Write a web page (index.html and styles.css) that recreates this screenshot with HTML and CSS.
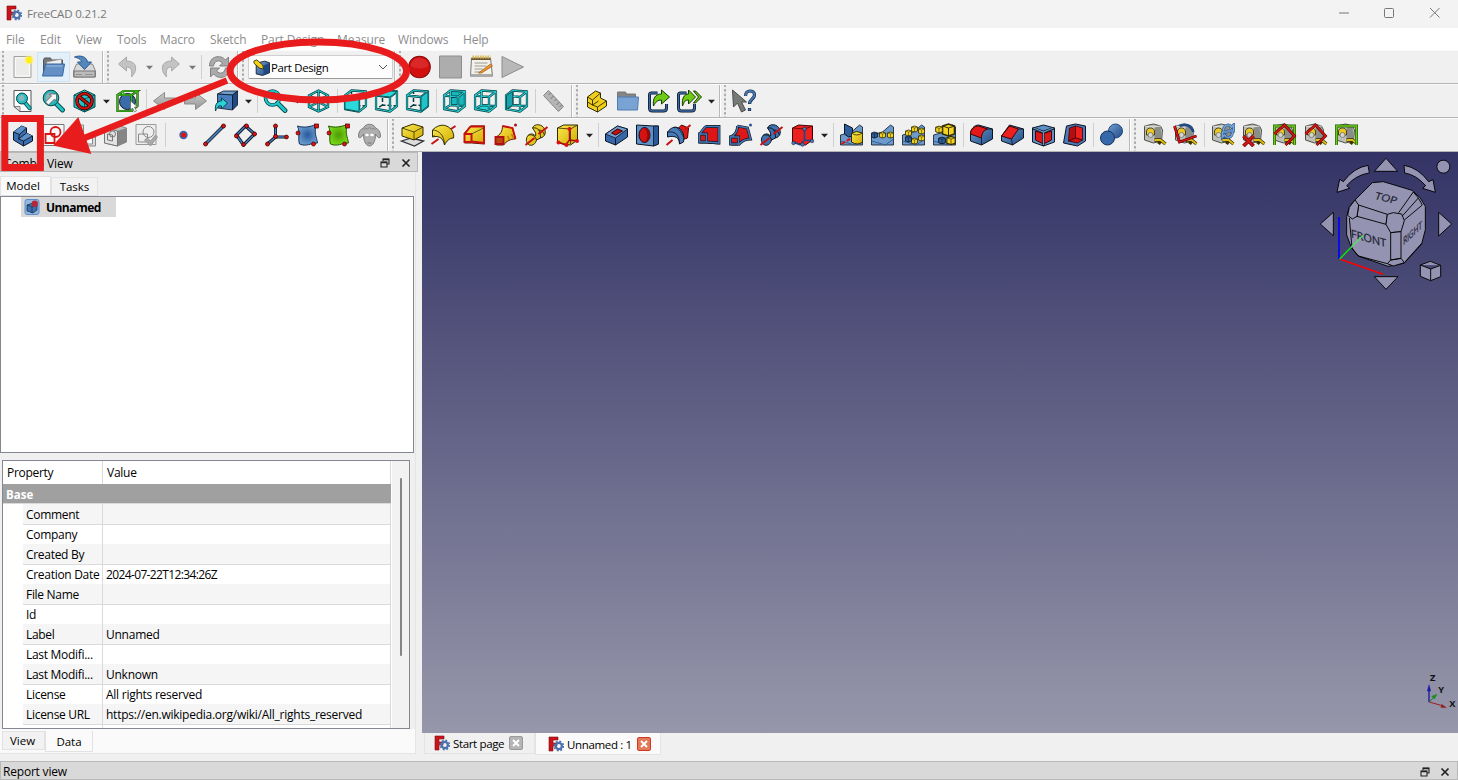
FILE: index.html
```html
<!DOCTYPE html>
<html lang="en">
<head>
<meta charset="utf-8">
<title>FreeCAD 0.21.2</title>
<link rel="stylesheet" href="styles.css">
</head>
<body>
<svg class="defs" aria-hidden="true">
<defs>
<linearGradient id="gb" x1="0" y1="0" x2="1" y2="1"><stop offset="0" stop-color="#729fcf"/><stop offset="1" stop-color="#204a87"/></linearGradient>
<linearGradient id="gy" x1="0" y1="0" x2="1" y2="1"><stop offset="0" stop-color="#fce94f"/><stop offset="1" stop-color="#d0ab00"/></linearGradient>
<linearGradient id="gt" x1="0" y1="0" x2="1" y2="1"><stop offset="0" stop-color="#34e0e2"/><stop offset="1" stop-color="#0e9fa3"/></linearGradient>
<linearGradient id="gg" x1="0" y1="0" x2="0" y2="1"><stop offset="0" stop-color="#c9c9c9"/><stop offset="1" stop-color="#969696"/></linearGradient>
<radialGradient id="gbr"><stop offset="0" stop-color="#285a9c"/><stop offset="1" stop-color="#6a9bd0"/></radialGradient>
<radialGradient id="ggr"><stop offset="0" stop-color="#4e9a06"/><stop offset="1" stop-color="#78d916"/></radialGradient>
<radialGradient id="gsun"><stop offset="0" stop-color="#fff200"/><stop offset=".5" stop-color="#ffee30"/><stop offset="1" stop-color="#fff79a" stop-opacity="0"/></radialGradient>

<symbol id="logo" viewBox="0 0 16 16"><path d="M1 1h9v3H5v3h4v3H5v5H1z" fill="#cb1419" stroke="#7d0b0e" stroke-width=".6"/><circle cx="10.800" cy="10" r="3.100" fill="none" stroke="#4b72ac" stroke-width="2.300"/><circle cx="10.800" cy="10" r="4.700" fill="none" stroke="#4b72ac" stroke-width="1.500" stroke-dasharray="1.900 1.790"/></symbol>
<symbol id="new" viewBox="0 0 24 24"><path d="M3.500 1.500h17v21h-17z" fill="#ebebe9" stroke="#a2a29e"/><path d="M5 3h14v18H5z" fill="none" stroke="#fafafa"/><circle cx="18.500" cy="5" r="5.500" fill="url(#gsun)"/></symbol>
<symbol id="open" viewBox="0 0 24 24"><path d="M2 21V5l1-2h6l1 2h11v5" fill="#777" stroke="#555"/><path d="M5 7l15-3v6H5z" fill="#eee" stroke="#888" stroke-width=".7"/><path d="M4 9h19l-2 12H1z" fill="#648fc4" stroke="#3465a4"/><path d="M5 11h16" stroke="#9bbce2"/></symbol>
<symbol id="save" viewBox="0 0 24 24"><path d="M4 9h16l3 7v6H1v-6z" fill="#d8d8d8" stroke="#888"/><path d="M1.500 16h21v6h-21z" fill="#bcbcbc" stroke="#777"/><path d="M13 19.500h7M4 19.500h6" stroke="#666" stroke-dasharray="1 1"/><path d="M2 2C7 0 14 1 15 7h4l-7 7.500L5 7h4C9 5 6 3 2 2z" fill="#5286bd" stroke="#2f5b91"/></symbol>
<symbol id="undo" viewBox="0 0 24 24"><path d="M3 9l8-7v4c8 0 11 5 8 12l-3 4c1-8-1-10-5-10v4z" fill="#c3c3c3" stroke="#aaa"/></symbol>
<symbol id="redo" viewBox="0 0 24 24"><path d="M21 9l-8-7v4C5 6 2 11 5 18l3 4c-1-8 1-10 5-10v4z" fill="#c3c3c3" stroke="#aaa"/></symbol>
<symbol id="refresh" viewBox="0 0 24 24"><path d="M2 11C2 1 13-1 18 5l3-3v9h-9l3-3c-4-4-8-2-9 3zM22 13c0 10-11 12-16 6l-3 3v-9h9l-3 3c4 4 8 2 9-3z" fill="#aaa" stroke="#808080"/></symbol>
<symbol id="rec" viewBox="0 0 24 24"><circle cx="12" cy="12" r="10.800" fill="#d21010" stroke="#8c0c0c" stroke-width="1.100"/><path d="M3 11a9 8 0 0118 0q-9 5-18 0" fill="#e94a4a" opacity=".4"/></symbol>
<symbol id="stop" viewBox="0 0 24 24"><path d="M1 1h22v22H1z" fill="#adadad" stroke="#8d8d8d"/></symbol>
<symbol id="macro" viewBox="0 0 24 24"><path d="M2 3h19l2 18H1z" fill="#f3f1e8" stroke="#777"/><path d="M1 19h22v3H1z" fill="#aaa"/><path d="M2 3h19v2H2z" fill="#6d5633"/><path d="M3 2h18" stroke="#deb849" stroke-width="3" stroke-dasharray="1.500 1"/><path d="M5 8h13M5 11h12M5 14h8M5 17h6" stroke="#999"/><path d="M9 18l12-9 2 2-11 7z" fill="#ed9830" stroke="#9c520c" stroke-width=".7"/></symbol>
<symbol id="play" viewBox="0 0 24 24"><path d="M1.500 1.500L23 12 1.500 22.500z" fill="#b8b8b8" stroke="#8c8c8c"/></symbol>
<symbol id="wbpd" viewBox="0 0 16 16"><path d="M3 4l8-2 4.500 1.500v9.500L9 15.500 3 14z" fill="url(#gb)" stroke="#0b1521" stroke-width=".8"/><path d="M10 6v9l5-2.500V4z" fill="#204a87"/><path d="M.8 2L3.500.8 9 5.500l1 4-4-1-5-4.500z" fill="#f5d21a" stroke="#302b00" stroke-width=".8"/></symbol>
<symbol id="lens" viewBox="0 0 24 24"><path d="M14 14l7.500 7.500" stroke="#06474a" stroke-width="4.800" stroke-linecap="round"/><circle cx="9" cy="9" r="7" fill="#ccebed" fill-opacity=".4" stroke="#06474a" stroke-width="3.600"/><circle cx="9" cy="9" r="7" fill="none" stroke="#20c5c8" stroke-width="2"/><path d="M14.500 14.500l7 7" stroke="#20c5c8" stroke-width="3" stroke-linecap="round"/></symbol>
<symbol id="fitall" viewBox="0 0 24 24"><path d="M3.500 1.500h17v21h-11l-6-5z" fill="#fff" stroke="#555"/><path d="M3.500 17.500h6v5z" fill="#ddd" stroke="#555" stroke-width=".7"/><path d="M14 13l5 6" stroke="#06474a" stroke-width="4.200" stroke-linecap="round"/><path d="M14 13l5 6" stroke="#20c5c8" stroke-width="2.600" stroke-linecap="round"/><circle cx="11.500" cy="9.500" r="5.500" fill="#24bfc4" stroke="#06474a"/><circle cx="11" cy="9" r="3" fill="#89b7bc"/></symbol>
<symbol id="fitsel" viewBox="0 0 24 24"><path d="M15 15l6 6" stroke="#06474a" stroke-width="4.800" stroke-linecap="round"/><path d="M15 15l6 6" stroke="#20c5c8" stroke-width="3" stroke-linecap="round"/><circle cx="9.500" cy="9" r="7.800" fill="#28b5bc" stroke="#06474a"/><circle cx="9" cy="8.500" r="5" fill="#90b0b5"/><path d="M4 13l6-6-2-2h7v7l-2-2-6 6z" fill="#f5f5f5" stroke="#333" stroke-width=".6"/></symbol>
<symbol id="draw" viewBox="0 0 24 24"><path d="M12 1l10.500 5v12L12 23 1.500 18V6z" fill="url(#gt)" stroke="#06474a"/><path d="M1.500 6L12 10l10.500-4M12 10v13" stroke="#06474a" fill="none" stroke-width=".8"/><circle cx="12" cy="12" r="7.500" fill="none" stroke="#280000" stroke-width="3.600"/><path d="M6.500 7.500l11 9" stroke="#280000" stroke-width="3.600"/><circle cx="12" cy="12" r="7.500" fill="none" stroke="#cc1010" stroke-width="2.200"/><path d="M6.500 7.500l11 9" stroke="#cc1010" stroke-width="2.200"/></symbol>
<symbol id="bbox" viewBox="0 0 24 24"><circle cx="12" cy="12.500" r="8" fill="#3a6cac" stroke="#0b1521"/><path d="M2 6h14v16H2zM2 6l6-4h14l-6 4M22 2v15l-6 5" fill="none" stroke="#17330b" stroke-width="2.200"/><path d="M2 6h14v16H2zM2 6l6-4h14l-6 4M22 2v15l-6 5M8 2v4" fill="none" stroke="#3bb41c" stroke-width="1.400"/><path d="M15 12v9l2-2 2 4 2-1-2-4h3z" fill="#fff" stroke="#555" stroke-width=".6"/></symbol>
<symbol id="left" viewBox="0 0 24 24"><path d="M1 12L12 3.500V9h11v6H12v5.500z" fill="url(#gg)" stroke="#8b8b8b"/></symbol>
<symbol id="right" viewBox="0 0 24 24"><path d="M23 12L12 3.500V9H1v6h11v5.500z" fill="url(#gg)" stroke="#8b8b8b"/></symbol>
<symbol id="link" viewBox="0 0 24 24"><path d="M3 5l6-3h14l-5 4z" fill="#729fcf" stroke="#0b1521" stroke-width=".8"/><path d="M3 5l15 1v15L3 19z" fill="#4a7dbd" stroke="#0b1521" stroke-width=".8"/><path d="M18 6l5-4v14l-5 5z" fill="#204a87" stroke="#0b1521" stroke-width=".8"/><path d="M1 22c-1-8 3-10 6-10V9l6 5-6 6v-3c-3-1-4 1-6 5z" fill="#2bd3d6" stroke="#06474a"/></symbol>
<symbol id="iso" viewBox="0 0 24 24"><g fill="none"><path d="M12 1.500l9.500 5v11.500L12 22.500 2.500 18V6.500zM12 1.500v21M2.500 6.500L12 11l9.500-4.500M2.500 18L12 13l9.500 5" stroke="#073c3f" stroke-width="2.400"/><path d="M12 1.500l9.500 5v11.500L12 22.500 2.500 18V6.500zM12 1.500v21M2.500 6.500L12 11l9.500-4.500M2.500 18L12 13l9.500 5" stroke="#20c5c8" stroke-width="1.100"/></g></symbol>
<symbol id="wire" viewBox="0 0 24 24"><g fill="none" stroke-linejoin="round"><path d="M1.500 6.500l14 1.500v14.500L1.500 20zM1.500 6.500L8 1.500l14.500 1-7 5.500M22.500 2.500v14.500l-7 5.500" stroke="#073c3f" stroke-width="2.300"/><path d="M8 2v3M8 9v7l14 1M8 16l-6 4" stroke="#073c3f" stroke-width="1.500" stroke-dasharray="4 2"/><path d="M1.500 6.500l14 1.500v14.500L1.500 20zM1.500 6.500L8 1.500l14.500 1-7 5.500M22.500 2.500v14.500l-7 5.500" stroke="#24cccf" stroke-width="1.100"/></g></symbol>
<symbol id="wireb" viewBox="0 0 24 24"><g fill="none" stroke-linejoin="round"><path d="M8 1.500v14.500l14.500 1M8 16l-6.500 4M1.500 6.500l14 1.500v14.500L1.500 20zM1.500 6.500L8 1.500l14.500 1-7 5.500M22.500 2.500v14.500l-7 5.500" stroke="#073c3f" stroke-width="2.300"/><path d="M8 1.500v14.500l14.500 1M8 16l-6.500 4M1.500 6.500l14 1.500v14.500L1.500 20zM1.500 6.500L8 1.500l14.500 1-7 5.500M22.500 2.500v14.500l-7 5.500" stroke="#24cccf" stroke-width="1.100"/></g></symbol>
<symbol id="vfront" viewBox="0 0 24 24"><use href="#wire"/><path d="M1.500 6.500l14 1.500v14.500L1.500 20z" fill="#2bd9dc" stroke="#073c3f" stroke-width=".8"/></symbol>
<symbol id="vtop" viewBox="0 0 24 24"><use href="#wire"/><path d="M1.500 6.500L8 1.500l14.500 1-7 5.500z" fill="#2bd9dc" stroke="#073c3f" stroke-width=".8"/></symbol>
<symbol id="vright" viewBox="0 0 24 24"><use href="#wire"/><path d="M15.500 8l7-5.500v14.500l-7 5.500z" fill="#1fc4c8" stroke="#073c3f" stroke-width=".8"/></symbol>
<symbol id="vrear" viewBox="0 0 24 24"><path d="M8 2l14 1v14L8 16z" fill="#19b7bb"/><use href="#wireb"/></symbol>
<symbol id="vbottom" viewBox="0 0 24 24"><path d="M2 20l6-4 14 1-6 5z" fill="#2bd9dc"/><use href="#wireb"/></symbol>
<symbol id="vleft" viewBox="0 0 24 24"><use href="#wireb"/><path d="M2 6.500L8 2.500v13.500l-6 4z" fill="#18a4aa" stroke="#073c3f" stroke-width=".7"/></symbol>
<symbol id="ruler" viewBox="0 0 24 24"><path d="M7 1.500l15 16-5 5-15-16z" fill="#b5b5b5" stroke="#848484"/><path d="M9 4L7 6M12 7l-3 3M15 10l-2 2M18 13l-3 3M20 16l-2 2" stroke="#777"/></symbol>
<symbol id="part" viewBox="0 0 24 24"><path d="M3 8l8-6 5 2v5l6 3v5l-9 6-10-5z" fill="#f0cf1c" stroke="#302b00"/><path d="M3 8l5 3 8-7M3 13l5 3 6-4M8 11v5l5 2 9-6M13 18v5" fill="none" stroke="#302b00" stroke-width=".9"/></symbol>
<symbol id="folder" viewBox="0 0 24 24"><path d="M2 19V3h8l1 2h9v5" fill="#858585" stroke="#777"/><path d="M2 8h21l-1 13H2z" fill="#79a3d3" stroke="#4d7db4"/></symbol>
<symbol id="elink" viewBox="0 0 24 24"><path d="M11 4H5Q3 4 3 6v13q0 3 3 3h11q3 0 3-3v-4" fill="none" stroke="#0b1521" stroke-width="3"/><path d="M11 4H5Q3 4 3 6v13q0 3 3 3h11q3 0 3-3v-4" fill="none" stroke="#3a6aaa" stroke-width="1.500"/><path d="M7 17c-1-8 2-12 8-12V1l8 7-8 7v-4c-4 0-6 2-8 6z" fill="#6dcb13" stroke="#173a00"/></symbol>
<symbol id="elinks" viewBox="0 0 24 24"><path d="M9 4H3Q1 4 1 6v13q0 3 3 3h10q3 0 3-3v-4" fill="none" stroke="#0b1521" stroke-width="3"/><path d="M9 4H3Q1 4 1 6v13q0 3 3 3h10q3 0 3-3v-4" fill="none" stroke="#3a6aaa" stroke-width="1.500"/><path d="M5 17c-1-8 2-12 6-12V1l7 7-7 7v-4c-4 0-4 2-6 6zM16 2h2l6 6-6 6h-2l5-6z" fill="#6dcb13" stroke="#173a00"/></symbol>
<symbol id="whats" viewBox="0 0 24 24"><path d="M0 1l1 17 4-4 4 9 4-2-4-8h5z" fill="#777b77" stroke="#494d49"/><path d="M13 7c0-7 9-6 9-1 0 4-5 4-5 9M17 19v3" fill="none" stroke="#10203a" stroke-width="3.200"/><path d="M13 7c0-7 9-6 9-1 0 4-5 4-5 8.500M17 19.500v2" fill="none" stroke="#4478b8" stroke-width="2"/></symbol>

<symbol id="body" viewBox="0 0 24 24"><path d="M3 9l8-6 5 2v5l6 3v5l-9 5-10-6z" fill="#3b6eb0" stroke="#0b1521"/><path d="M3 9l8-6 5 2-7 6zM13 18l-5-2 8-6 6 3z" fill="#5f90c8"/><path d="M3 9l6 2.500 7-6.500M9 11.500L8 16l5 2 9-5M13 18v5M8 16l8-6" fill="none" stroke="#0b1521" stroke-width=".9"/></symbol>
<symbol id="sketch" viewBox="0 0 24 24"><path d="M1.500 1.500h21v21h-21z" fill="#f7f7f7" stroke="#777"/><path d="M4 11h9v9H4z" fill="none" stroke="#d91414" stroke-width="1.800"/><circle cx="14" cy="9" r="5" fill="none" stroke="#d91414" stroke-width="1.800"/></symbol>
<symbol id="gattach" viewBox="0 0 24 24"><path d="M1 2h10v12h12v9H9V14H1z" fill="#ddd" stroke="#888"/><path d="M13 15h7v6h-7z" fill="#fafafa" stroke="#888"/></symbol>
<symbol id="gmap" viewBox="0 0 24 24"><path d="M1 5l12-3 10 3v14l-9 4-13-3z" fill="#bebebe" stroke="#888"/><path d="M14 8l9-3v14l-9 4z" fill="#858585"/><path d="M1 5l13 3v15L1 20z" fill="#e3e3e3" stroke="#777"/><circle cx="9" cy="11" r="3" fill="none" stroke="#777"/><path d="M4 11l5 1v6l-5-1z" fill="none" stroke="#777"/></symbol>
<symbol id="gcheck" viewBox="0 0 24 24"><path d="M1.500 1.500h20v20h-20z" fill="#eee" stroke="#999"/><circle cx="14" cy="9" r="5.500" fill="none" stroke="#888"/><path d="M4 11h9v8H4z" fill="none" stroke="#888"/><path d="M10 17l3-2 3 3 5-6 2 2-7 9z" fill="#aaa" stroke="#8d8d8d" stroke-width=".8"/></symbol>
<symbol id="point" viewBox="0 0 24 24"><circle cx="12" cy="12" r="4.200" fill="#3767ac"/><circle cx="12" cy="12" r="2.500" fill="#e31212"/></symbol>
<symbol id="line" viewBox="0 0 24 24"><path d="M3 21L21 3" stroke="#0b1521" stroke-width="3.200"/><path d="M3 21L21 3" stroke="#477bb9" stroke-width="1.800"/><g fill="#e01212" stroke="#400" stroke-width=".8"><circle cx="3" cy="21" r="2"/><circle cx="21" cy="3" r="2"/></g></symbol>
<symbol id="plane" viewBox="0 0 24 24"><path d="M12 3l9 8-11 11-7-10z" fill="none" stroke="#0b1521" stroke-width="3.200"/><path d="M12 3l9 8-11 11-7-10z" fill="none" stroke="#477bb9" stroke-width="1.600"/><g fill="#e01212" stroke="#400" stroke-width=".8"><circle cx="13" cy="3" r="2"/><circle cx="21" cy="11" r="2"/><circle cx="10" cy="21.500" r="1.900"/><circle cx="3" cy="13" r="2"/></g></symbol>
<symbol id="csys" viewBox="0 0 24 24"><path d="M11 3v11h11M11 14l-8 7" fill="none" stroke="#0b1521" stroke-width="3"/><path d="M11 3v11h11M11 14l-8 7" fill="none" stroke="#477bb9" stroke-width="1.500"/><g fill="#e01212" stroke="#400" stroke-width=".8"><circle cx="11" cy="3" r="2"/><circle cx="11" cy="13.500" r="2"/><circle cx="22" cy="14" r="1.900"/><circle cx="3" cy="21" r="2"/></g></symbol>
<symbol id="shapeb" viewBox="0 0 24 24"><path d="M2 3c6 2 12 1 19-1.500-3 8 0 12 1 18.500-7 0-11 4-18 1-2-6 1-11-2-18z" fill="url(#gbr)" stroke="#16335b"/><g fill="#e01212" stroke="#400" stroke-width=".7"><rect x="19" y="1" width="4" height="4"/><circle cx="2.500" cy="10" r="2"/><circle cx="18" cy="21" r="2"/></g></symbol>
<symbol id="shapeg" viewBox="0 0 24 24"><path d="M2 3c6 2 12 1 19-1.500-3 8 0 12 1 18.500-7 0-11 4-18 1-2-6 1-11-2-18z" fill="url(#ggr)" stroke="#245700"/><g fill="#e01212" stroke="#400" stroke-width=".7"><rect x="19" y="1" width="4" height="4"/><circle cx="2.500" cy="10" r="2"/><circle cx="18" cy="21" r="2"/></g></symbol>
<symbol id="sheep" viewBox="0 0 24 24"><path d="M6 5c2-5 10-5 12 0 3 1 5 4 5 8 0 3-3 2-5-2 0 8-3 12-6 12s-6-4-6-12c-2 4-5 5-5 2 0-4 2-7 5-8z" fill="#aeaeae" stroke="#7d7d7d"/><path d="M6 7q2-3 4-1 2-3 4 0 3-2 4 1" stroke="#888" fill="none"/><ellipse cx="9.500" cy="12" rx="1.800" ry="1.200" fill="#fff"/><ellipse cx="14.500" cy="12" rx="1.800" ry="1.200" fill="#fff"/><path d="M10 20h4" stroke="#777"/></symbol>

<symbol id="pad" viewBox="0 0 24 24"><path d="M1 18l10-3 12 3-9 5z" fill="#ddd" stroke="#333" stroke-width="1.300"/><path d="M1.500 5l11-4L22.500 4v8l-9 5-12-4z" fill="url(#gy)" stroke="#302b00"/><path d="M1.500 5l12 4 9-5M13.500 9v8" fill="none" stroke="#302b00" stroke-width=".8"/></symbol>
<symbol id="revolve" viewBox="0 0 24 24"><path d="M15 9l9-6" stroke="#c81010" stroke-width="2"/><path d="M1 7C5 3 10 1 15 3c5 2 8 7 7 12-4 0-7 3-9 7C12 16 8 12 1 14z" fill="url(#gy)" stroke="#302b00"/><path d="M1 7c6 0 12 5 12 15M1 14l2-2" fill="none" stroke="#302b00" stroke-width=".8"/><path d="M0 21l7-5" stroke="#c81010" stroke-width="2"/></symbol>
<symbol id="loft" viewBox="0 0 24 24"><path d="M2 10L8 3h14v18l-13-1H2z" fill="url(#gy)" stroke="#5e1500"/><path d="M8 3.500l13.500 0V20L9 18.500" fill="none" stroke="#c81010" stroke-width="2"/><path d="M2 11h7v8H2zM2 11L8 3.500" fill="none" stroke="#c81010" stroke-width="2"/><path d="M9 11l12-6" stroke="#302b00" stroke-width=".7"/></symbol>
<symbol id="pipe" viewBox="0 0 24 24"><path d="M2 14c5-2 7-6 7-11l10 2 3 11c-5 0-9 2-12 6H3z" fill="url(#gy)" stroke="#5e1500"/><path d="M9 3l10 2 3 11" fill="none" stroke="#c81010" stroke-width="1.900"/><path d="M2 14h8v7H2z" fill="#b94710" stroke="#b21010" stroke-width="1.900"/><path d="M14 13l2 4M18 11l2 4" stroke="#cf7a13" stroke-width="1.600"/><circle cx="22" cy="2" r="1.500" fill="#9f1717"/></symbol>
<symbol id="helix" viewBox="0 0 24 24"><path d="M8 5c2-5 10-4 12 1 2 4 0 8-4 9l-4 2c-1 4-4 6-7 5-4-2-4-7-1-10 3-2 5-1 7 1 1-3-1-5-3-8z" fill="url(#gy)" stroke="#302b00"/><path d="M8 5c6-1 8 3 8 10M4 12c5-1 7 2 8 5M14 7c3 0 5 2 6 5" fill="none" stroke="#302b00"/><path d="M1 22L10 15M14 11L23 4" stroke="#c81010" stroke-width="2"/></symbol>
<symbol id="abox" viewBox="0 0 24 24"><path d="M2 5l6-3h14v15l-7 5-13-2z" fill="url(#gy)" stroke="#302b00"/><path d="M2 5l13 1 7-4M15 6v15" fill="none" stroke="#302b00" stroke-width=".8"/><path d="M14 6v11l8 1M14 17l-4 5M3 19l7 3" fill="none" stroke="#a70b0b" stroke-width="1.500"/><g fill="#d11"><circle cx="14" cy="6" r="2"/><circle cx="3" cy="19.500" r="2"/><circle cx="21.500" cy="18" r="2"/><circle cx="11" cy="22" r="2"/></g></symbol>
<symbol id="pocket" viewBox="0 0 24 24"><path d="M1 11l12-8 10 3v8L11 22 1 18z" fill="#3667a8" stroke="#0b1521"/><path d="M1 11l12-8 10 3-12 9z" fill="#729fcf" stroke="#0b1521" stroke-width=".8"/><path d="M11 15v7" stroke="#0b1521"/><path d="M7 10l6-4 5 2-7 4z" fill="#c51010" stroke="#400"/></symbol>
<symbol id="hole" viewBox="0 0 24 24"><path d="M1 2l17 1 5 0v18l-5 2L1 21z" fill="#5f90c8" stroke="#0b1521"/><path d="M18 3h5v18l-5 2z" fill="#285a9c" stroke="#0b1521" stroke-width=".8"/><ellipse cx="9" cy="12" rx="5.500" ry="7.500" fill="#d51212" stroke="#0b1521"/><path d="M9 5q5 6 1 14 4 0 4.500-7T9 5" fill="#980808"/></symbol>
<symbol id="groove" viewBox="0 0 24 24"><path d="M10 7l5-5 7 3-1 10-6 2z" fill="#e21818" stroke="#400"/><path d="M1 9c3-4 7-6 11-4 5 2 6 9 5 14l-4 2c0-6-4-9-12-7z" fill="#477bb9" stroke="#0b1521"/><path d="M1 9c8-1 12 3 12 12M8 4c5 1 7 6 9 10" stroke="#0b1521" fill="none" stroke-width=".8"/><path d="M0 22l6-5M18 7l6-5" stroke="#c81010" stroke-width="2"/></symbol>
<symbol id="sloft" viewBox="0 0 24 24"><path d="M2 10L8 3h14v18l-13-1H2z" fill="#dc1616" stroke="#0b1521"/><path d="M2 11h7v8H2zM8 3.500h13.500V20L9 19M2 11l6-7.500" fill="none" stroke="#0b1521" stroke-width="2.800"/><path d="M2 11h7v8H2zM8 3.500h13.500V20L9 19M2 11l6-7.500" fill="none" stroke="#477bb9" stroke-width="1.600"/></symbol>
<symbol id="spipe" viewBox="0 0 24 24"><path d="M2 13c5-2 7-5 7-10l10 2 3 11c-5 0-9 2-12 6H3z" fill="#dc1818" stroke="#400"/><path d="M9 3l10 2 3 11c-5 0-9 2-12 6M2 14h8v7H2zM2 14c5-2 7-6 7-11" fill="none" stroke="#0b1521" stroke-width="2.800"/><path d="M9 3l10 2 3 11c-5 0-9 2-12 6M2 14h8v7H2zM2 14c5-2 7-6 7-11" fill="none" stroke="#4475b2" stroke-width="1.600"/><circle cx="22" cy="2" r="1.500" fill="#285291"/></symbol>
<symbol id="shelix" viewBox="0 0 24 24"><path d="M8 5c2-5 10-4 12 1 2 4 0 8-4 9l-4 2c-1 4-4 6-7 5-4-2-4-7-1-10 3-2 5-1 7 1 1-3-1-5-3-8z" fill="#3f72b1" stroke="#0b1521"/><path d="M8 5c6-1 8 3 8 10M4 12c5-1 7 2 8 5M14 7c3 0 5 2 6 5" fill="none" stroke="#0b1521"/><path d="M1 22L10 15M14 11L23 4" stroke="#c81010" stroke-width="2"/></symbol>
<symbol id="sbox" viewBox="0 0 24 24"><path d="M2 5l6-3 14 1v14l-7 5-13-2z" fill="#ed2020" stroke="#400"/><path d="M2 5l12 1 8-3" fill="none" stroke="#600" stroke-width=".8"/><path d="M14 7v10l8 1M14 17l-4 5M3 19l7 3" fill="none" stroke="#204a87" stroke-width="1.600"/><g fill="#477bb9" stroke="#0b1521" stroke-width=".5"><circle cx="14" cy="6" r="1.800"/><circle cx="3" cy="20" r="1.800"/><circle cx="21.500" cy="18" r="1.800"/><circle cx="12" cy="21.500" r="1.800"/></g></symbol>

<symbol id="base" viewBox="0 0 24 24"><path d="M1 12l11-3L20 2l3 2v18H1z" fill="#6d9acb" stroke="#0b1521" stroke-width=".8"/><path d="M1 18l14 4 8-6" stroke="#315f99" fill="none"/></symbol>
<symbol id="mirror" viewBox="0 0 24 24"><use href="#base"/><path d="M2 21l20-12" stroke="#d11" stroke-width="2" stroke-dasharray="4 2"/><path d="M5 1l8 4v8l-4 1-4-3z" fill="#2f5e9e" stroke="#0b1521"/><path d="M12 10q5-3 11 0v9q-5 4-11 0z" fill="url(#gy)" stroke="#302b00"/><path d="M12 10q5 4 11 0" fill="none" stroke="#302b00" stroke-width=".8"/></symbol>
<symbol id="cubelet" viewBox="0 0 8 8"><path d="M1 2l3-1 3 1v4L4 7 1 6z" fill="#f3d423" stroke="#302b00" stroke-width=".8"/><path d="M1 2l3 1 3-1M4 3v4" fill="none" stroke="#302b00" stroke-width=".5"/></symbol>
<symbol id="bcubelet" viewBox="0 0 8 8"><path d="M1 2l3-1 3 1v4L4 7 1 6z" fill="#2c5f9f" stroke="#0b1521" stroke-width=".8"/><path d="M1 2l3 1 3-1M4 3v4" fill="none" stroke="#0b1521" stroke-width=".5"/></symbol>
<symbol id="linpat" viewBox="0 0 24 24"><use href="#base"/><use href="#bcubelet" x="0" y="8" width="8" height="8"/><use href="#cubelet" x="8" y="8" width="8" height="8"/><use href="#cubelet" x="16" y="8" width="8" height="8"/></symbol>
<symbol id="polpat" viewBox="0 0 24 24"><use href="#base"/><use href="#cubelet" x="3" y="6" width="8" height="8"/><use href="#cubelet" x="9" y="2" width="8" height="8"/><use href="#cubelet" x="16" y="4" width="8" height="8"/><use href="#cubelet" x="16" y="11" width="8" height="8"/><use href="#cubelet" x="9" y="14" width="8" height="8"/><use href="#bcubelet" x="3" y="12" width="8" height="8"/></symbol>
<symbol id="multi" viewBox="0 0 24 24"><use href="#base"/><use href="#cubelet" x="8" y="-1" width="16" height="16"/><use href="#cubelet" x="2" y="2" width="9" height="9"/><use href="#bcubelet" x="5" y="13" width="9" height="9"/><use href="#cubelet" x="13" y="12" width="11" height="11"/></symbol>
<symbol id="fillet" viewBox="0 0 24 24"><path d="M1 11c0-5 4-9 8-9l14 4v10l-11 6-11-4z" fill="url(#gb)" stroke="#0b1521"/><path d="M1 11c0-5 4-8 8-8l9 3c-4 1-6 5-6 9z" fill="#e41818" stroke="#400"/><path d="M18 6h5M12 15v7" stroke="#0b1521" stroke-width=".8"/></symbol>
<symbol id="chamfer" viewBox="0 0 24 24"><path d="M1 13l8-11 14 4v9l-11 7-11-4z" fill="url(#gb)" stroke="#0b1521"/><path d="M1 13l8-10 9 3-7 10z" fill="#ed2020" stroke="#400"/><path d="M18 6h5M11 16l1 6" stroke="#0b1521" stroke-width=".8"/></symbol>
<symbol id="draft" viewBox="0 0 24 24"><path d="M1 5l11-3 11 3v14l-11 4-11-4z" fill="#5f90c8" stroke="#0b1521"/><path d="M4 8l8 2.500L20 8v9l-8 4-8-4z" fill="#dc1717" stroke="#400"/><path d="M1 5l11 4 11-4M12 9v14" fill="none" stroke="#0b1521" stroke-width="2.400"/><path d="M2 5l10 4 10-4M12 9v13" fill="none" stroke="#6d9acb" stroke-width="1.200"/></symbol>
<symbol id="thick" viewBox="0 0 24 24"><path d="M4 3l9-2 10 2v15l-8 5-14-3z" fill="#477bb9" stroke="#0b1521"/><path d="M7 5l6-2v12l-7 3z" fill="#b90c0c" stroke="#400" stroke-width=".8"/><path d="M13 3l7 2v12l-7-2z" fill="#ed2020" stroke="#400" stroke-width=".8"/><path d="M6 18l7-3 7 2-5 3z" fill="#d01313" stroke="#400" stroke-width=".8"/></symbol>
<symbol id="bool" viewBox="0 0 24 24"><circle cx="16" cy="8" r="7" fill="url(#gb)" stroke="#204a87"/><circle cx="8" cy="15" r="7" fill="#3768aa" stroke="#16335b"/></symbol>

<symbol id="tape" viewBox="0 0 24 24"><path d="M2 3l9-2 7 2 2 4-1 11-8 2-9-3z" fill="#bdbfb9" stroke="#4d4f4a"/><path d="M12 4l6-1 1 14-7 2z" fill="#8b8d88"/><path d="M2 3l9 1 7-1" stroke="#efefed" fill="none" stroke-width=".8"/><path d="M4 12V8c1-4 7-4 8 0v4z" fill="#ebc922" stroke="#4a421c"/><circle cx="8" cy="12" r="2.500" fill="#d5d6d2" stroke="#666" stroke-width=".7"/><path d="M12 17l6 0 5 4M18 18l-2 3" fill="none" stroke="#393100" stroke-width="3.300"/><path d="M12 17l6 0 5 4" fill="none" stroke="#dfbd16" stroke-width="1.900"/></symbol>
<symbol id="tangle" viewBox="0 0 24 24"><use href="#tape"/><path d="M6 3q10-4 14 6" fill="none" stroke="#204a87" stroke-width="2.600"/><path d="M1 3l5 16 17-6" fill="none" stroke="#500" stroke-width="2.800"/><path d="M1 3l5 16 17-6" fill="none" stroke="#d51515" stroke-width="1.700"/></symbol>
<symbol id="trefresh" viewBox="0 0 24 24"><use href="#tape"/><path d="M13 8c0-7 6-7 8-4l2-2v6h-6M22 9c0 6-6 7-8 3l-2 2V9h5" fill="none" stroke="#27558c" stroke-width="2.800"/><path d="M13 8c0-7 6-7 8-4l2-2v6h-6M22 9c0 6-6 7-8 3l-2 2V9h5" fill="none" stroke="#75a4d7" stroke-width="1.600"/></symbol>
<symbol id="tclear" viewBox="0 0 24 24"><use href="#tape"/><path d="M2 13l10 10M12 13L2 23" stroke="#500" stroke-width="3.600"/><path d="M2 13l10 10M12 13L2 23" stroke="#d51515" stroke-width="2.400"/></symbol>
<symbol id="tgreen" viewBox="0 0 24 24"><use href="#tape"/><path d="M2 22V3h20v19" fill="none" stroke="#245700" stroke-width="3"/><path d="M2 22V3h20v19" fill="none" stroke="#6bcb20" stroke-width="1.700"/></symbol>
<symbol id="tred" viewBox="0 0 24 24"><use href="#tape"/><path d="M2 11L12 2l10 11-9 9" fill="none" stroke="#500" stroke-width="2.800"/><path d="M2 11L12 2l10 11-9 9" fill="none" stroke="#d51515" stroke-width="1.700"/></symbol>
<symbol id="tall" viewBox="0 0 24 24"><use href="#tgreen"/><path d="M2 11L12 2l10 11-9 9" fill="none" stroke="#500" stroke-width="2.800"/><path d="M2 11L12 2l10 11-9 9" fill="none" stroke="#d51515" stroke-width="1.700"/></symbol>

<symbol id="doc" viewBox="0 0 16 16"><rect x="1" y=".5" width="14" height="15" rx="2" fill="#93b8e0" stroke="#5b8fce"/><path d="M3 6l6-2 4 2v5l-4 3-6-2z" fill="#3c70b0" stroke="#0b1521" stroke-width=".6"/><path d="M3 6l5 2v6M8 8l5-2" fill="none" stroke="#0b1521" stroke-width=".5"/><circle cx="10.800" cy="4.800" r="3.200" fill="#b3283a"/></symbol>
<symbol id="float" viewBox="0 0 10 10"><path d="M3 3V1h6v5H7M1 4h6v5H1z" fill="none" stroke="#222" stroke-width="1.100"/><path d="M1 4.500h6M3 1.500h6" stroke="#222" stroke-width="1.500"/></symbol>
<symbol id="xx" viewBox="0 0 10 10"><path d="M1.500 1.500l7 7M8.500 1.500l-7 7" stroke="#222" stroke-width="1.700"/></symbol>
<symbol id="xw" viewBox="0 0 14 14"><path d="M3.500 3.500l7 7M10.500 3.500l-7 7" stroke="#fff" stroke-width="2.200"/></symbol>
<symbol id="dd" viewBox="0 0 8 5"><path d="M0 .5h8L4 4.800z"/></symbol>
</defs>
</svg>

<div class="window">
<header class="titlebar"><svg class="logo"><use href="#logo"/></svg><span>FreeCAD 0.21.2</span>
<svg class="winbtns" viewBox="0 0 104 14"><path d="M1 7h10M92 2l9.500 9.500M101.500 2L92 11.500" fill="none" stroke="#777"/><rect x="46.500" y="2.500" width="9" height="9" rx="1" fill="none" stroke="#777"/></svg></header>
<nav class="menu"><span class="m1">File</span><span class="m2">Edit</span><span class="m3">View</span><span class="m4">Tools</span><span class="m5">Macro</span><span class="m6">Sketch</span><span class="m7">Part Design</span><span class="m8">Measure</span><span class="m9">Windows</span><span>Help</span></nav>

<div class="toolrow">
<i class="grip first"></i><svg class="ic"><use href="#new"/></svg><svg class="ic hot"><use href="#open"/></svg><svg class="ic"><use href="#save"/></svg>
<i class="grip"></i><svg class="ic"><use href="#undo"/></svg><svg class="dd gray"><use href="#dd"/></svg><svg class="ic"><use href="#redo"/></svg><svg class="dd gray"><use href="#dd"/></svg><i class="sep"></i><svg class="ic"><use href="#refresh"/></svg>
<i class="grip"></i><div class="combo"><svg><use href="#wbpd"/></svg><span>Part Design</span><svg class="chev" viewBox="0 0 10 6"><path d="M1 1l4 4 4-4" fill="none" stroke="#555"/></svg></div>
<i class="grip"></i><svg class="ic"><use href="#rec"/></svg><svg class="ic"><use href="#stop"/></svg><svg class="ic"><use href="#macro"/></svg><svg class="ic"><use href="#play"/></svg>
</div>

<div class="toolrow">
<i class="grip first"></i><svg class="ic"><use href="#fitall"/></svg><svg class="ic"><use href="#fitsel"/></svg><svg class="ic"><use href="#draw"/></svg><svg class="dd"><use href="#dd"/></svg><svg class="ic"><use href="#bbox"/></svg><i class="sep"></i><svg class="ic"><use href="#left"/></svg><svg class="ic"><use href="#right"/></svg><svg class="ic"><use href="#link"/></svg><svg class="dd"><use href="#dd"/></svg><i class="sep"></i><svg class="ic"><use href="#lens"/></svg><svg class="dd"><use href="#dd"/></svg><svg class="ic"><use href="#iso"/></svg><i class="sep"></i><svg class="ic"><use href="#vfront"/></svg><svg class="ic"><use href="#vtop"/></svg><svg class="ic"><use href="#vright"/></svg><i class="sep"></i><svg class="ic"><use href="#vrear"/></svg><svg class="ic"><use href="#vbottom"/></svg><svg class="ic"><use href="#vleft"/></svg><i class="sep"></i><svg class="ic"><use href="#ruler"/></svg>
<i class="grip"></i><svg class="ic"><use href="#part"/></svg><svg class="ic"><use href="#folder"/></svg><svg class="ic"><use href="#elink"/></svg><svg class="ic"><use href="#elinks"/></svg><svg class="dd"><use href="#dd"/></svg>
<i class="grip"></i><svg class="ic"><use href="#whats"/></svg>
</div>

<div class="toolrow">
<i class="grip first"></i><svg class="ic"><use href="#body"/></svg><svg class="ic"><use href="#sketch"/></svg><svg class="ic"><use href="#gattach"/></svg><svg class="ic"><use href="#gmap"/></svg><svg class="ic"><use href="#gcheck"/></svg><i class="sep"></i><svg class="ic"><use href="#point"/></svg><svg class="ic"><use href="#line"/></svg><svg class="ic"><use href="#plane"/></svg><svg class="ic"><use href="#csys"/></svg><svg class="ic"><use href="#shapeb"/></svg><svg class="ic"><use href="#shapeg"/></svg><svg class="ic"><use href="#sheep"/></svg>
<i class="grip"></i><svg class="ic"><use href="#pad"/></svg><svg class="ic"><use href="#revolve"/></svg><svg class="ic"><use href="#loft"/></svg><svg class="ic"><use href="#pipe"/></svg><svg class="ic"><use href="#helix"/></svg><svg class="ic"><use href="#abox"/></svg><svg class="dd"><use href="#dd"/></svg><i class="sep"></i><svg class="ic"><use href="#pocket"/></svg><svg class="ic"><use href="#hole"/></svg><svg class="ic"><use href="#groove"/></svg><svg class="ic"><use href="#sloft"/></svg><svg class="ic"><use href="#spipe"/></svg><svg class="ic"><use href="#shelix"/></svg><svg class="ic"><use href="#sbox"/></svg><svg class="dd"><use href="#dd"/></svg><i class="sep"></i><svg class="ic"><use href="#mirror"/></svg><svg class="ic"><use href="#linpat"/></svg><svg class="ic"><use href="#polpat"/></svg><svg class="ic"><use href="#multi"/></svg><i class="sep"></i><svg class="ic"><use href="#fillet"/></svg><svg class="ic"><use href="#chamfer"/></svg><svg class="ic"><use href="#draft"/></svg><svg class="ic"><use href="#thick"/></svg><i class="sep"></i><svg class="ic"><use href="#bool"/></svg>
<i class="grip"></i><svg class="ic"><use href="#tape"/></svg><svg class="ic"><use href="#tangle"/></svg><i class="sep"></i><svg class="ic"><use href="#trefresh"/></svg><svg class="ic"><use href="#tclear"/></svg><svg class="ic"><use href="#tall"/></svg><svg class="ic"><use href="#tred"/></svg><svg class="ic"><use href="#tgreen"/></svg>
</div>

<main class="work">
<aside class="side">
<div class="docktitle"><span>Combo View</span><svg><use href="#float"/></svg><svg><use href="#xx"/></svg></div>
<div class="combobox">
<div class="tabs"><span class="tab on t-model">Model</span><span class="tab t-tasks">Tasks</span></div>
<div class="tree"><div class="node"><svg><use href="#doc"/></svg><b>Unnamed</b></div></div>
<div class="props">
<div class="table">
<div class="row head"><span>Property</span><span>Value</span></div>
<div class="group">Base</div>
<div class="row"><span>Comment</span><span></span></div>
<div class="row"><span>Company</span><span></span></div>
<div class="row"><span>Created By</span><span></span></div>
<div class="row"><span>Creation Date</span><span class="date">2024-07-22T12:34:26Z</span></div>
<div class="row"><span>File Name</span><span></span></div>
<div class="row"><span>Id</span><span></span></div>
<div class="row"><span>Label</span><span>Unnamed</span></div>
<div class="row"><span>Last Modifi...</span><span></span></div>
<div class="row"><span>Last Modifi...</span><span>Unknown</span></div>
<div class="row"><span>License</span><span>All rights reserved</span></div>
<div class="row"><span>License URL</span><span>https://en.wikipedia.org/wiki/All_rights_reserved</span></div>
<div class="row"><span></span><span></span></div>
</div>
<div class="scroll"><div class="thumb"></div></div>
</div>
<div class="btabs"><span class="tab t-view">View</span><span class="tab on t-data">Data</span></div>
</div>
</aside>
<section class="mdi">
<div class="view">
<svg class="cube" viewBox="0 0 444 435">
<g fill="#9494b2" stroke="#000" stroke-width="2.800" stroke-linejoin="round">
<path d="M193 64L228 25l35 39zM193 380h71l-36 38zM31 222l39-35v70zM386 187l39 35-39 36z"/>
<circle cx="400" cy="50" r="19.500"/>
<path d="M174 46q-43 7-74 49l-11-7-8 39 38-12-9-8q29-33 68-38z"/>
<path d="M282 46q43 7 74 49l13-6 7 38-38-12 9-8q-29-33-63-38z"/>
<path d="M331 345l30-11 31 12v34l-30 12-31-13zM331 345l31 12 30-11M362 357v35"/>
<path d="M187 98l33-3 86 26 24 22 16 26v70l-11 43-53 58-48 9-89-31-20-23-15-40v-55l8-30 17-20z"/>
<path d="M146 165l86 28-4 30-87-24z"/>
<path d="M118 172l17-22 11 15-5 34-14 8-14-11z"/>
<path d="M232 193l18-5 25 4 8 20-10 33-31 3-14-25z"/>
<path d="M242 248l31-3v80l-31 5zM232 341l10-11 31-5 10 13-33 10z"/>
<path d="M118 204l8 90 19 24 87 23M266 188l44-62M278 197l47-53M283 210l54-45M310 126l15 18 12 21M283 338l52-58" fill="none"/>
</g>
<g class="facetext"><text transform="matrix(.97 .24 -.3 .8 192 146)" font-size="35">TOP</text><text transform="matrix(1 .28 .04 1 123 262)" font-size="33">FRONT</text><text transform="matrix(.62 -.58 .02 1 280 286)" font-size="31">RIGHT</text></g>
<path d="M87 201v126" stroke="#00f" stroke-width="5"/><path d="M89 327l130 46" stroke="#f00" stroke-width="5"/><path d="M89 327l33-34" stroke="#00f000" stroke-width="4"/><path d="M122 293l37-37" stroke="#55e566" stroke-width="4"/>
</svg>
<svg class="axes" viewBox="0 0 100 110"><path d="M27 84V43" stroke="#1a1aa0" stroke-width="4"/><path d="M27 30l6 22H21z" fill="#1a1aa0"/><path d="M27 84l14-13" stroke="#118011" stroke-width="3"/><path d="M52 59l-8 17-10-9z" fill="#189018"/><path d="M27 84l40 11" stroke="#952020" stroke-width="3"/><path d="M81 101l-19 0 3-11z" fill="#952020"/><g class="axt"><text x="30" y="20">Z</text><text x="55" y="56">Y</text><text x="88" y="98">X</text></g></svg>
</div>
<div class="mditabs"><div class="mtab"><svg><use href="#logo"/></svg><span>Start page</span><svg class="x"><use href="#xw"/></svg></div><div class="mtab cur"><svg><use href="#logo"/></svg><span>Unnamed : 1</span><svg class="x red"><use href="#xw"/></svg></div></div>
</section>
</main>
<footer class="report"><span>Report view</span><svg><use href="#float"/></svg><svg><use href="#xx"/></svg></footer>
</div>

<svg class="marks" viewBox="0 0 460 180"><g fill="none" stroke="#e81c1c" stroke-width="7"><ellipse cx="318.300" cy="71" rx="88.200" ry="29"/><rect x="4.800" y="118.500" width="35.600" height="49"/><path d="M227 80.500L82 139" stroke-width="6.500"/></g><path d="M53 145.500l25.300-28.500 13 37z" fill="#e81c1c"/></svg>
</body>
</html>
```
FILE: styles.css
```css
* { box-sizing: border-box; }
body { margin: 0; background: #f0f0f0; font-family: "Open Sans", "Noto Sans", sans-serif; font-size: 12px; color: #000; }
.defs { position: absolute; width: 0; height: 0; }
.window { width: 1458px; height: 780px; display: flex; flex-direction: column; overflow: hidden; }

.titlebar { height: 28px; background: #f3f3f3; display: flex; align-items: center; padding: 0 16px 2px 6px; color: #777; }
.titlebar .logo { width: 16px; height: 16px; margin-right: 5px; }
.titlebar span { font-size: 11.5px; letter-spacing: -.15px; }
.winbtns { width: 104px; height: 14px; margin-left: auto; }
.menu { height: 22px; background: #fff; display: flex; gap: 16px; padding: 3px 6px 0; line-height: 18px; color: #8d8d8d; letter-spacing: -.1px; }
.m1 { width: 18px; } .m2 { width: 20px; } .m3 { width: 25px; } .m4 { width: 27px; } .m5 { width: 34px; }
.m6 { width: 35px; } .m7 { width: 60px; white-space: nowrap; } .m8 { width: 45px; } .m9 { width: 49px; }

.toolrow { height: 34px; flex: none; display: flex; align-items: center; background: #f0f0f0; border-bottom: 1px solid #b4b4b4; border-top: 1px solid #fbfbfb; }
.ic { width: 31px; height: 24px; flex: none; }
.ic.hot { background: #e3f0fa; outline: 1px solid #cde4f7; height: 28px; padding: 2px 0; }
.dd { width: 12px; height: 5px; padding: 0 2px 0 3px; flex: none; fill: #222; }
.dd.gray { fill: #777; }
.sep { width: 6px; height: 24px; flex: none; background: linear-gradient(#cfcfcf, #cfcfcf) 3px 0 / 1px 100% no-repeat; }
.grip { width: 12px; height: 32px; flex: none; background: linear-gradient(#b9b9b9, #b9b9b9) 2px 0 / 1px 100% no-repeat, linear-gradient(#fff, #fff) 3px 0 / 1px 100% no-repeat, radial-gradient(circle, #aaa 0 1px, transparent 1.3px) 6px 3px / 4px 4.6px repeat-y; }
.grip.first { width: 7px; background: radial-gradient(circle, #aaa 0 1px, transparent 1.3px) 1px 3px / 4px 4.6px repeat-y; }
.combo { width: 145px; height: 24px; background: #fdfdfd; border: 1px solid #cfcfcf; border-bottom-color: #999; border-radius: 2px; display: flex; align-items: center; margin-left: 1px; padding: 0 4px; margin-right: -1px; }
.combo svg { width: 17px; height: 17px; margin-right: 1px; }
.combo span { font-size: 11.4px; letter-spacing: -.33px; }
.combo .chev { width: 10px; height: 6px; margin: 0 0 0 auto; }

.work { display: flex; height: 603px; flex: none; }
.side { width: 422px; display: flex; flex-direction: column; }
.docktitle { width: 418px; height: 20px; background: #d9d9d9; border: 1px solid #b9b9b9; display: flex; align-items: center; padding: 3px 6px 0 3px; }
.docktitle span { flex: 1; letter-spacing: -.1px; }
.docktitle svg { width: 10px; height: 10px; margin: 0 0 2px 11px; }
.combobox { width: 416px; height: 582px; padding-top: 4px; border-right: 1px solid #e5e5e5; }
.tabs { display: flex; height: 20px; align-items: flex-end; }
.tab { border: 1px solid #e2e2e2; background: #f2f2f2; text-align: center; font-size: 11.5px; }
.tab.on { background: #fafafa; }
.t-model { width: 51px; height: 20px; line-height: 17px; padding-right: 5px; }
.t-tasks { width: 47px; height: 19px; line-height: 17px; }
.tree { width: 414px; height: 257px; background: #fff; border: 1px solid #828790; }
.node { display: flex; align-items: center; width: 95px; height: 20px; margin-left: 20px; background: #d9d9d9; padding-left: 3px; }
.node svg { width: 16px; height: 16px; margin-right: 6px; }
.node b { letter-spacing: -.55px; }
.props { width: 408px; height: 269px; margin: 7px 0 0 2px; background: #fff; border: 1px solid #828790; display: flex; overflow: hidden; }
.table { width: 388px; flex: none; }
.row { height: 20px; display: grid; grid-template-columns: 80px 288px; margin-left: 20px; line-height: 19px; white-space: nowrap; }
.row span { border-right: 1px solid #dadada; border-bottom: 1px solid #dadada; padding: 1px 0 0 3px; letter-spacing: -.25px; }
.row span:first-child { letter-spacing: -.3px; }
.row:nth-child(odd) span { background: #f5f5f5; }
.row.head { height: 23px; margin-left: 0; grid-template-columns: 100px 288px; line-height: 22px; }
.row.head span { background: #fff; border-bottom: 0; padding-left: 4px; }
.group { height: 20px; background: #a0a0a0; color: #fff; font-weight: bold; padding-left: 3px; line-height: 21px; border-bottom: 1px solid #dadada; font-size: 11.5px; }
.row .date { letter-spacing: -.63px; }
.scroll { flex: 1; background: #f2f2f2; margin-left: 1px; padding: 17px 0 0 8px; }
.thumb { width: 2px; height: 178px; background: #858585; border-radius: 1px; }
.btabs { display: flex; height: 25px; background: #fafafa; align-items: flex-start; padding: 2px 0 0 2px; border-bottom: 1px solid #e5e5e5; }
.t-view { width: 43px; height: 19px; line-height: 18px; padding-right: 2px; }
.t-data { width: 48px; height: 21px; line-height: 21px; border-top: 0; }

.mdi { width: 1036px; }
.view { height: 581px; background: linear-gradient(#333366, #9797ab); position: relative; }
.cube { position: absolute; left: 888px; top: -2px; width: 148px; height: 145px; }
.facetext { font-family: "Open Sans", sans-serif; fill: #222232; stroke: #222232; stroke-width: .8; }
.axes { position: absolute; left: 998px; top: 522px; width: 33.3px; height: 36.7px; overflow: visible; }
.axt { font-size: 28px; font-weight: bold; fill: #111; }
.mditabs { display: flex; height: 22px; padding-left: 2px; align-items: flex-start; }
.mtab { display: flex; align-items: center; width: 111px; height: 21px; padding-left: 9px; border: 1px solid #e4e4e4; border-top: 0; }
.mtab svg { width: 16px; height: 16px; margin-right: 3px; flex: none; }
.mtab span { font-size: 11.5px; letter-spacing: -.35px; white-space: nowrap; }
.mtab.cur { width: 126px; height: 22px; background: #fafafa; padding: 1px 0 0 12px; }
.mtab .x { width: 14px; height: 14px; margin: -1px 0 0 5px; border: 1px solid #999; border-radius: 2px; background: #b5b5b5; }
.mtab .x.red { background: #e07a57; border-color: #d63320; }
.report { margin-top: 6px; height: 19px; background: #d9d9d9; border: 1px solid #b9b9b9; display: flex; align-items: center; padding: 2px 7px 0 2px; flex: none; }
.report span { flex: 1; letter-spacing: -.2px; }
.report svg { width: 10px; height: 10px; margin-left: 10px; }

.marks { position: absolute; left: 0; top: 0; width: 460px; height: 180px; pointer-events: none; }
```
